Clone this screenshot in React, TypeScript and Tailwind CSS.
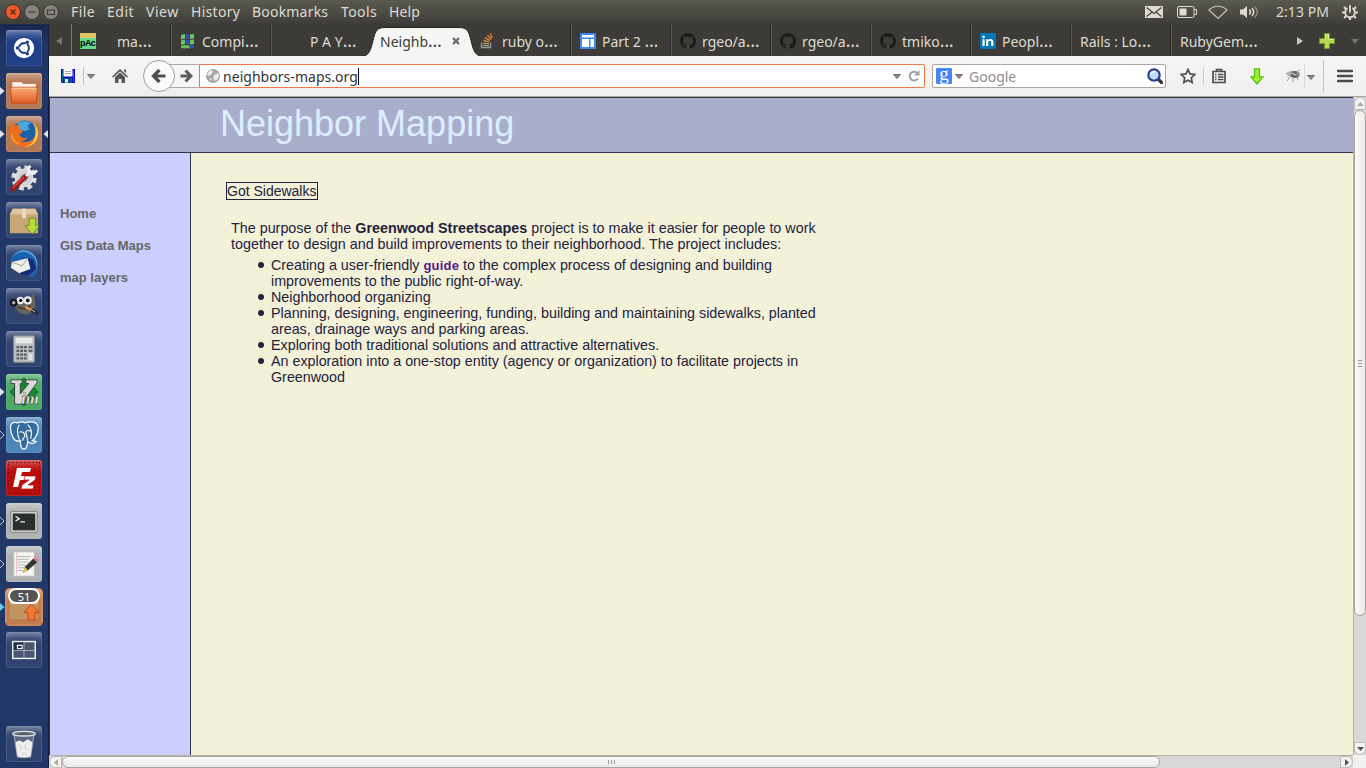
import React from "react";

const GITHUB =
  "M8 0C3.58 0 0 3.58 0 8c0 3.54 2.29 6.53 5.47 7.59.4.07.55-.17.55-.38 0-.19-.01-.82-.01-1.49-2.01.37-2.53-.49-2.69-.94-.09-.23-.48-.94-.82-1.13-.28-.15-.68-.52-.01-.53.63-.01 1.08.58 1.23.82.72 1.21 1.87.87 2.33.66.07-.52.28-.87.51-1.07-1.78-.2-3.64-.89-3.64-3.95 0-.87.31-1.59.82-2.15-.08-.2-.36-1.02.08-2.12 0 0 .67-.21 2.2.82.64-.18 1.32-.27 2-.27s1.36.09 2 .27c1.53-1.04 2.2-.82 2.2-.82.44 1.1.16 1.92.08 2.12.51.56.82 1.27.82 2.15 0 3.07-1.87 3.75-3.65 3.95.29.25.54.73.54 1.48 0 1.07-.01 1.93-.01 2.2 0 .21.15.46.55.38A8.01 8.01 0 0 0 16 8c0-4.42-3.58-8-8-8z";

function GithubIcon() {
  return (
    <svg className="h-4 w-4" viewBox="0 0 16 16">
      <path d={GITHUB} fill="#1b1b1b" />
    </svg>
  );
}

function PacIcon() {
  return (
    <span className="flex h-4 w-4 flex-col overflow-hidden bg-[#62dc8c]">
      <span className="h-[5px] shrink-0 bg-[#e0c468]" />
      <span className="text-[9px] leading-[10px] font-bold tracking-[-0.6px] text-black [font-family:'Liberation_Sans',sans-serif]">pAc</span>
    </span>
  );
}

function CompizIcon() {
  return (
    <svg className="h-4 w-4" viewBox="0 0 16 16">
      <path d="M1 2l4-1v4.500l-4 1zM1 7.500l4-1V11l-4 1zM1 13l4-1 1 1v2.500L1 15z" fill="#66c95c" />
      <path d="M5.500 1l4 .5V6l-4-.5zM5.500 6.500L9.500 7v4.500l-4-.5z" fill="#4a45c8" />
      <path d="M10 1.500L14 1v4.500L10 6zM10 7l4-.5V11l-4 .5zM5.500 12l4 .5v3l-3-.5z" fill="#66c95c" />
      <path d="M10 12.500l4-.5v3l-4 .5z" fill="#4a45c8" />
    </svg>
  );
}

function StackIcon() {
  return (
    <svg className="h-4 w-4" viewBox="0 0 16 16" fill="none">
      <path d="M1.500 9.500v5h9v-5" stroke="#9a9c9e" strokeWidth="1.300" />
      <path d="M3 12.500h6" stroke="#a59a80" strokeWidth="1.300" />
      <path d="M3 10.200l6 .6" stroke="#b49458" strokeWidth="1.300" />
      <path d="M3.400 7.500l5.900 1.400" stroke="#d08e3c" strokeWidth="1.300" />
      <path d="M4.800 4.600l5.200 2.800" stroke="#e88a2a" strokeWidth="1.300" />
      <path d="M7.300 2l3.900 4.200M10.300.5l2.100 4.600" stroke="#f48024" strokeWidth="1.300" />
    </svg>
  );
}

function PanelIcon() {
  return (
    <svg className="h-4 w-4" viewBox="0 0 16 16">
      <rect width="16" height="16" rx="1" fill="#4285f4" />
      <path d="M2 2h12v2.500H2zM2 6h7v8H2zM10.500 6H14v8h-3.500z" fill="#fff" />
    </svg>
  );
}

function LinkedInIcon() {
  return (
    <svg className="h-4 w-4" viewBox="0 0 16 16">
      <rect width="16" height="16" rx="1" fill="#0177b5" />
      <path d="M2.500 6.200h2.200V13H2.500zM6.100 6.200h2.100v1c.4-.7 1.200-1.200 2.300-1.200 2.200 0 2.900 1.300 2.900 3.300V13h-2.200V9.600c0-1-.2-1.800-1.300-1.800S8.300 8.600 8.300 9.600V13H6.100z" fill="#fff" />
      <circle cx="3.600" cy="3.900" r="1.300" fill="#fff" />
    </svg>
  );
}

type TabProps = { icon?: React.ReactNode; label: string; pad?: string; sep?: boolean; track?: string };

function Ellipsis() {
  return <span className="text-[17.500px] leading-none">…</span>;
}

function Tab({ icon, label, pad = "pl-2", sep = true, track = "" }: TabProps) {
  return (
    <div className={`flex h-8 w-[100px] shrink-0 items-center gap-1.5 pt-0.5 ${pad} ${sep ? "border-r border-[#5d5c56] shadow-[inset_-1px_0_0_#262522]" : ""}`}>
      {icon}
      <span className={`pt-px text-[14px] leading-5 whitespace-pre text-[#dfdbd2] ${track}`}>{label}<Ellipsis /></span>
    </div>
  );
}

function ActiveTab() {
  return (
    <div className="relative flex h-8 w-[100px] shrink-0 items-center pt-0.5 pl-2">
      <svg className="absolute top-[3px] -left-[11px] h-[30px] w-[122px]" viewBox="0 0 122 30">
        <path d="M0 29.500C7 29 9 25 11 17.500 14 6 14 .5 24 .5h74c10 0 10 5.500 13 17 2 7.500 4 11.500 11 12z" fill="#f5f5f4" stroke="#23221f" strokeWidth="1" />
        <path d="M0 29h122v1H0z" fill="#f5f5f4" />
      </svg>
      <span className="relative pt-px text-[14px] leading-5 whitespace-pre text-[#3c3c3c]">Neighb<Ellipsis /></span>
      <svg className="relative mr-3 ml-auto h-2 w-2" viewBox="0 0 8 8">
        <path d="M1 1l6 6M7 1L1 7" stroke="#666" strokeWidth="2.200" />
      </svg>
    </div>
  );
}

function MenuBar() {
  return (
    <div className="flex h-6 shrink-0 items-center bg-linear-to-b from-[#5b5a50] to-[#3e3d39] text-[14px] text-[#dfdbd2]">
      <div className="flex w-[71px] gap-[3px] pl-[5px]">
        <svg className="h-4 w-4" viewBox="0 0 16 16">
          <circle cx="8" cy="8" r="7.500" fill="#f0592a" stroke="#3a3530" />
          <path d="M5.500 5.500l5 5M10.500 5.500l-5 5" stroke="#4a2418" strokeWidth="1.300" />
        </svg>
        <svg className="h-4 w-4" viewBox="0 0 16 16">
          <circle cx="8" cy="8" r="7.500" fill="#85837c" stroke="#3a3935" />
          <path d="M4.500 8h7" stroke="#3a3935" strokeWidth="1.200" />
        </svg>
        <svg className="h-4 w-4" viewBox="0 0 16 16">
          <circle cx="8" cy="8" r="7.500" fill="#85837c" stroke="#3a3935" />
          <path d="M4.500 6h7v4.500h-7z" fill="none" stroke="#3a3935" strokeWidth="1.200" />
        </svg>
      </div>
      <div className="flex -translate-y-px tracking-[0.12px]">
        <span className="w-9 tracking-[0.4px]">File</span>
        <span className="w-[39px] tracking-[0.5px]">Edit</span>
        <span className="w-[45px] tracking-[0.5px]">View</span>
        <span className="w-[61px] tracking-[0.3px]">History</span>
        <span className="w-[89px] tracking-[0.2px]">Bookmarks</span>
        <span className="w-12 tracking-[0.4px]">Tools</span>
        <span>Help</span>
      </div>
      <div className="ml-auto flex items-center">
        <svg className="h-3 w-[18px]" viewBox="0 0 18 12">
          <rect width="18" height="12" fill="#dfdbd2" />
          <path d="M1.500 1.500L9 7.500l7.500-6M1.500 10.500L7 6.200M16.500 10.500L11 6.200" fill="none" stroke="#484741" strokeWidth="1.300" />
        </svg>
        <svg className="ml-3.5 h-3 w-5" viewBox="0 0 20 12">
          <rect x=".5" y=".5" width="16.500" height="11" rx="1.500" fill="none" stroke="#dfdbd2" />
          <path d="M17 3.500h2.500v5H17" fill="none" stroke="#dfdbd2" />
          <rect x="2.500" y="2.500" width="7" height="7" fill="#dfdbd2" />
        </svg>
        <svg className="ml-[11px] h-4 w-5" viewBox="0 0 20 16">
          <path d="M1 6C6 1 14 1 19 6L10 14.500z" fill="none" stroke="#c9c5bd" strokeWidth="1.200" />
        </svg>
        <svg className="ml-3 h-4 w-5" viewBox="0 0 20 16">
          <path d="M0 5.500h3L7 2v12l-4-3.500H0z" fill="#dfdbd2" />
          <path d="M9.500 5.500q2 2.500 0 5M12 4q3.400 4 0 8" fill="none" stroke="#dfdbd2" strokeWidth="1.500" />
          <path d="M14.800 2.500q5 5.500 0 11" fill="none" stroke="#8a8880" strokeWidth="1.500" />
        </svg>
        <span className="ml-4 w-[66px] -translate-y-px tracking-[0.05px] whitespace-nowrap">2:13 PM</span>
        <svg className="mr-2 h-4 w-4" viewBox="0 0 16 16">
          <circle cx="8" cy="8.500" r="4.800" fill="none" stroke="#dfdbd2" strokeWidth="1.900" />
          <path d="M8 13v3M3.800 12.200l-1.600 1.800M12.200 12.200l1.600 1.800M3 8.500H0M13 8.500h3M4 5L2 3M12 5l2-2" stroke="#dfdbd2" strokeWidth="2.200" />
          <path d="M8 1v7" stroke="#47463f" strokeWidth="4.500" />
          <path d="M8 1v7.500" stroke="#dfdbd2" strokeWidth="1.900" />
        </svg>
      </div>
    </div>
  );
}

function TabStrip() {
  return (
    <div className="flex h-8 shrink-0 items-center bg-[#3c3b37]">
      <div className="flex h-8 w-[23px] shrink-0 items-center border-r border-[#777670] pt-0.5 pl-[7px]">
        <svg className="h-2 w-1.5" viewBox="0 0 6 8"><path d="M6 0v8L0 4z" fill="#75746f" /></svg>
      </div>
      <Tab icon={<PacIcon />} label={"   ma"} pad="pl-2" track="pl-1" />
      <Tab icon={<CompizIcon />} label="Compi" />
      <Tab label="P A Y" pad="pl-[38px]" sep={false} />
      <ActiveTab />
      <Tab icon={<StackIcon />} label="ruby o" />
      <Tab icon={<PanelIcon />} label="Part 2 " />
      <Tab icon={<GithubIcon />} label="rgeo/a" />
      <Tab icon={<GithubIcon />} label="rgeo/a" />
      <Tab icon={<GithubIcon />} label="tmiko" />
      <Tab icon={<LinkedInIcon />} label="Peopl" />
      <Tab label="Rails : Lo" />
      <Tab label="RubyGem" sep={false} />
      <div className="flex items-center pt-0.5">
        <svg className="ml-[25px] h-2 w-1.5 shrink-0" viewBox="0 0 6 8"><path d="M0 0v8l6-4z" fill="#c9c6bf" /></svg>
        <svg className="ml-4 h-4 w-4 shrink-0" viewBox="0 0 16 16">
          <path d="M5.500.5h5v5h5v5h-5v5h-5v-5h-5v-5h5z" fill="#b4d653" stroke="#6b9a22" />
          <path d="M6.500 6.500v-5h3v5h5" fill="none" stroke="#d8ee9a" />
        </svg>
        <svg className="ml-4 h-[5px] w-2 shrink-0" viewBox="0 0 8 5"><path d="M0 0h8L4 5z" fill="#74736d" /></svg>
      </div>
    </div>
  );
}

function Caret() {
  return <svg className="h-[5px] w-2 shrink-0" viewBox="0 0 8 5"><path d="M.5.5h7L4 4.500z" fill="#888" stroke="#707070" /></svg>;
}

function Toolbar() {
  return (
    <div className="flex h-[41px] shrink-0 items-center border-b border-[#aaa59f] bg-linear-to-b from-[#f6f5f4] to-[#f0efed]">
      <svg className="ml-3 h-3.5 w-3.5 shrink-0" viewBox="0 0 14 14">
        <path d="M0 0h14v14H1l-1-1z" fill="#0a0ac8" />
        <path d="M1 1h1v12H1zM12 2h1v11h-1z" fill="#17709c" />
        <path d="M2.500 0h9v7.500h-9z" fill="#f8f8f8" />
        <path d="M4 2.500h6M4 4.500h6" stroke="#a8a8a8" />
        <path d="M3 9h8v5H3z" fill="#0e4f90" /><path d="M4 10h3v3.500H4z" fill="#f2f2f2" />
      </svg>
      <span className="ml-2 h-[18px] w-px bg-[#c4c4c4]" />
      <span className="ml-[3px] flex"><Caret /></span>
      <svg className="ml-[17px] h-4 w-4 shrink-0" viewBox="0 0 16 16">
        <path d="M0 8.500L8 1l8 7.500-1.200 1L8 3.200 1.200 9.500zM12 1.500h2V5l-2-2z" fill="#555" />
        <path d="M3 9l5-4.500L13 9v6H9.500v-4h-3v4H3z" fill="#555" />
      </svg>
      <div className="relative z-10 ml-[15px] flex h-8 w-8 shrink-0 items-center justify-center rounded-full border border-[#9b9fa4] bg-[#fafafa]">
        <svg className="h-4 w-4" viewBox="0 0 16 16">
          <path d="M14.500 8H3M8.500 2L2.500 8l6 6" fill="none" stroke="#4d4d4d" strokeWidth="3.200" />
        </svg>
      </div>
      <div className="-ml-1.5 flex h-6 w-[30px] shrink-0 items-center border-y border-[#a9a9a9] bg-[#f6f6f6] pl-[11px]">
        <svg className="h-3.5 w-[13px]" viewBox="0 0 13 14">
          <path d="M.5 7H10M5.500 1.500L11 7l-5.500 5.500" fill="none" stroke="#5c5c5c" strokeWidth="3" />
        </svg>
      </div>
      <div className="flex h-6 w-[726px] shrink-0 items-center rounded-r-[2px] border border-[#ee7747] bg-white pl-1.5">
        <svg className="h-3.5 w-3.5" viewBox="0 0 14 14">
          <circle cx="7" cy="7" r="7" fill="#a6a6a6" />
          <path d="M2 3l3-2 2 1-1 3-3 2-2-1zM8 6l4-2 1 3-2 4-2 1-2-3zM3 9l3 1-1 2z" fill="#ececec" />
        </svg>
        <span className="ml-[3px] text-[14px] tracking-[0.04px] text-[#333]">neighbors-maps.org</span>
        <span className="h-[17px] w-px bg-black" />
        <span className="ml-auto flex pt-px"><Caret /></span>
        <svg className="mr-1 ml-[7px] h-3 w-3" viewBox="0 0 12 12">
          <path d="M9.800 8.500A4.400 4.400 0 1 1 9 2.800" fill="none" stroke="#98a1a8" strokeWidth="2" />
          <path d="M11.500 0v5.500H6z" fill="#98a1a8" />
        </svg>
      </div>
      <div className="ml-[7px] flex h-6 w-[234px] shrink-0 items-center rounded-[2px] border border-[#aaa5a0] bg-white pl-[3px]">
        <span className="flex h-4 w-4 items-center justify-center rounded-[1px] bg-[#4784f5] text-[19px] leading-none text-white [font-family:'Liberation_Serif',serif]"><span className="-mt-[5px]">g</span></span>
        <span className="ml-[3px] flex pt-px"><Caret /></span>
        <span className="ml-1.5 text-[14px] text-[#8e8e8e]">Google</span>
        <svg className="mr-0.5 ml-auto h-4 w-4" viewBox="0 0 16 16">
          <path d="M11 11l3.500 3.500" stroke="#333" strokeWidth="3.200" strokeLinecap="round" />
          <circle cx="7" cy="7" r="5.700" fill="#bfdcf5" stroke="#2d3f94" strokeWidth="2.200" />
          <path d="M4 6q1-2.500 4-2.500" stroke="#fff" fill="none" strokeWidth="1.500" />
        </svg>
      </div>
      <svg className="ml-3.5 h-4 w-4 shrink-0" viewBox="0 0 16 16">
        <path d="M8 1.500l2 4.400 4.800.6-3.500 3.300.9 4.700L8 12.200l-4.200 2.300.9-4.700L1.200 6.500 6 5.900z" fill="none" stroke="#505050" strokeWidth="1.700" />
      </svg>
      <span className="ml-[7px] h-[18px] w-px bg-[#cfcfcf]" />
      <svg className="ml-2 h-4 w-3.5 shrink-0" viewBox="0 0 14 16">
        <path d="M1 3.500h12v11H1zM4.500 3.500V1.500h5v2" fill="none" stroke="#4d4d4d" strokeWidth="1.700" />
        <path d="M3 6.500h1.500M6 6.500h5.500M3 9h1.500M6 9h5.500M3 11.500h1.500M6 11.500h5.500" stroke="#4d4d4d" strokeWidth="1.300" />
      </svg>
      <svg className="ml-6 h-[17px] w-3.5 shrink-0" viewBox="0 0 14 17">
        <path d="M4.500.8h5v8h3.700L7 16 .8 8.800h3.700z" fill="#9cf02c" stroke="#58bd17" strokeWidth="1.300" />
      </svg>
      <svg className="ml-5 h-4 w-[18px] shrink-0" viewBox="0 0 18 16">
        <path d="M2 5.500L8 3l5 3-3 3-5-1z" fill="#b8b8b8" stroke="#8a8a8a" strokeWidth=".6" />
        <ellipse cx="11" cy="6.500" rx="4.500" ry="3.500" fill="#666" />
        <path d="M6 9l-3 4M9 9.500V14M13 9l1 3.500M14 3l2-1" stroke="#999" />
        <circle cx="14" cy="6" r="1.800" fill="#999" /><path d="M7 5l5 2" stroke="#ddd" />
      </svg>
      <span className="ml-0.5 h-6 w-px bg-[#d8d8d8]" />
      <span className="ml-[2px] flex pt-0.5"><Caret /></span>
      <span className="ml-2 h-8 w-px bg-[#c0c4c8]" />
      <svg className="ml-[13px] h-3.5 w-4 shrink-0" viewBox="0 0 16 14">
        <path d="M1 2h14M1 7h14M1 12h14" stroke="#4a4a4a" strokeWidth="2.500" strokeLinecap="round" />
      </svg>
    </div>
  );
}

type Mark = "none" | "solid" | "open" | "blue";

function Tile({ tone, mark = "none", active = false, children }: { tone: string; mark?: Mark; active?: boolean; children: React.ReactNode }) {
  return (
    <div className="flex h-9 w-12 shrink-0 items-center">
      <svg className="h-2.5 w-1.5 shrink-0" viewBox="0 0 6 10">
        {mark === "solid" && <path d="M0 1l4.500 4L0 9z" fill="#dfe2e8" />}
        {mark === "blue" && <path d="M0 1l4.500 4L0 9z" fill="#6ec4ee" />}
        {mark === "open" && <path d="M0 1l4 4-4 4" fill="none" stroke="#c3c9d6" />}
      </svg>
      <div className={`flex h-9 w-9 shrink-0 items-center justify-center rounded-[3px] shadow-[inset_0_0_0_1px_rgba(255,255,255,0.08),inset_0_9px_10px_-7px_rgba(255,255,255,0.55)] ${tone}`}>{children}</div>
      <svg className="h-2.5 w-1.5 shrink-0" viewBox="0 0 6 10">{active && <path d="M6 1L1.500 5 6 9z" fill="#dfe2e8" />}</svg>
    </div>
  );
}

const ICON = "h-[30px] w-[30px]";
const DARK = "bg-[#30446f]";

function Launcher() {
  return (
    <aside className="flex w-[49px] shrink-0 flex-col gap-[7px] border-r border-[#151f35] bg-linear-to-b from-[#17264b] via-[#213767] via-3% to-[#213767] pt-1.5">
      <Tile tone="bg-[#213f88]">
        <svg className={ICON} viewBox="0 0 32 32">
          <circle cx="16" cy="16" r="10.800" fill="#fff" />
          <circle cx="16" cy="16" r="5.200" fill="none" stroke="#213f88" strokeWidth="2.200" />
          <path d="M16 16H7M16 16l4.500-7.800M16 16l4.500 7.800" stroke="#fff" strokeWidth="1.500" />
          <circle cx="16" cy="16" r="3.400" fill="#fff" />
          <circle cx="9" cy="16" r="1.900" fill="#213f88" /><circle cx="19.500" cy="9.900" r="1.900" fill="#213f88" /><circle cx="19.500" cy="22.100" r="1.900" fill="#213f88" />
        </svg>
      </Tile>
      <Tile tone="bg-[#b47854]" mark="solid">
        <svg className={ICON} viewBox="0 0 32 32">
          <defs><linearGradient id="fold" x2="0" y2="1"><stop stopColor="#f7ae78" /><stop offset="1" stopColor="#e65c24" /></linearGradient></defs>
          <path d="M3 8V6h10l2 2h14v6H3z" fill="#f6f3ef" stroke="#c9633a" strokeWidth=".8" />
          <path d="M1.500 12h29L29 29H3z" fill="url(#fold)" stroke="#c64c1b" />
          <path d="M3 13h26" stroke="#fbd0ae" />
        </svg>
      </Tile>
      <Tile tone="bg-[#b47854]" mark="solid" active>
        <svg className={ICON} viewBox="0 0 32 32">
          <circle cx="17" cy="14" r="12.500" fill="#1c5fa6" />
          <path d="M9 4q8-4 15 0l-4 3 2 4-5 2-6-2z" fill="#4aa7de" />
          <path d="M1 17C0 11 2 7 4 4q0 3 2 4 3-2 6-1-2 3-1 4l4 1q-1 3-4 4 0 3 4 4 3 1 5-1-2 5-8 4 8 4 14-2 4-5 2-12 5 8-1 15c-3 4-7 6-11 6C8 30 2 25 1 17z" fill="#ee6f1e" />
          <path d="M25 4q7 5 6 13c-1 8-8 13-15 13 7-2 11-6 12-12 1-6 0-10-3-14z" fill="#ffc93c" />
          <path d="M3 14q1 10 10 13-9 0-11-9z" fill="#f9a02a" />
        </svg>
      </Tile>
      <Tile tone={DARK}>
        <svg className={ICON} viewBox="0 0 32 32">
          <circle cx="16" cy="17" r="11" fill="none" stroke="#d6d8da" strokeWidth="5" strokeDasharray="4.900 3.740" />
          <circle cx="16" cy="17" r="9.500" fill="#d3d5d7" stroke="#e9eaea" /><circle cx="16" cy="17" r="4" fill="#8d98aa" />
          <path d="M4 29L18 15" stroke="#9b1616" strokeWidth="5" strokeLinecap="round" /><path d="M4 28L16 16" stroke="#dd4a40" strokeWidth="1.600" />
          <path d="M18 15l6-6M23 4q-4 3-1 6 4 3 8-1" fill="none" stroke="#f0f0f0" strokeWidth="3" />
        </svg>
      </Tile>
      <Tile tone={DARK}>
        <svg className={ICON} viewBox="0 0 32 32">
          <path d="M4 4h24l3 6v20H1V10z" fill="#c7a677" /><path d="M4 4h24l3 6H1z" fill="#dfc69e" /><path d="M14 4h4v10h-4z" fill="#ecdcc0" />
          <path d="M21.500 14h7v8h4L25 31l-8-9h4.500z" fill="#b8dc3c" stroke="#668f18" />
        </svg>
      </Tile>
      <Tile tone={DARK}>
        <svg className={ICON} viewBox="0 0 32 32">
          <path d="M2 12C5 3 15 0 23 5c8 5 9 15 6 23-2 4-7 3-10 0L7 21q-5-3-5-9z" fill="#1c61ad" />
          <path d="M3 10Q14-1 25 8q6 6 4 17 4-14-5-20Q12-2 3 10z" fill="#59a9e2" />
          <path d="M3 15l17-4 3 11-12 5-9-6z" fill="#efefea" /><path d="M3 15l11 4 6-8" fill="none" stroke="#a1a19b" />
          <path d="M20 10l6 3 3 9-8 7 2-7z" fill="#1a2878" /><path d="M11 27l12-4-2 6z" fill="#1a2878" />
        </svg>
      </Tile>
      <Tile tone={DARK}>
        <svg className={ICON} viewBox="0 0 32 32">
          <path d="M7 10q4 3 10-1 6 0 9-6 3 8 2 14-2 7-10 8-8-1-11-7z" fill="#69655b" />
          <circle cx="12" cy="10" r="4" fill="#eee" /><circle cx="20" cy="10" r="4.300" fill="#eee" /><circle cx="12.500" cy="10" r="1.800" fill="#111" /><circle cx="20" cy="10" r="2" fill="#111" />
          <circle cx="5" cy="12.500" r="4" fill="#131313" /><circle cx="5" cy="12.500" r="1.900" fill="#aaa" />
          <path d="M9 17q8 4 14-1" fill="none" stroke="#33302b" strokeWidth="1.500" />
          <path d="M17 17l8 3.500" stroke="#e9994a" strokeWidth="2.500" /><path d="M24 20l7 4.500" stroke="#252525" strokeWidth="3.500" /><path d="M24 20l4 2.500" stroke="#ddd" />
        </svg>
      </Tile>
      <Tile tone={DARK}>
        <svg className={ICON} viewBox="0 0 32 32">
          <rect x="5" y="2" width="22" height="28" rx="1" fill="#bdc1c2" stroke="#8f9698" /><rect x="7" y="4" width="18" height="6" fill="#e6e9e7" />
          <path d="M8 14h11M8 18h11M8 22h11M8 26h11" stroke="#5a6063" strokeWidth="2.600" strokeDasharray="3 1" /><path d="M21 14h4M21 18h4" stroke="#5a6063" strokeWidth="2.600" /><path d="M21 21h4v7h-4z" fill="#dce4e8" />
        </svg>
      </Tile>
      <Tile tone="bg-[#4aab66]" mark="solid">
        <svg className={ICON} viewBox="0 0 32 32">
          <path d="M16 1l15 15-15 15L1 16z" fill="#138a31" stroke="#0c5c20" />
          <path d="M2 3h12v4h-2v11L21 7h-3V3h12v3L13 29H6V7H2z" fill="#d8d8d6" stroke="#333" strokeWidth=".9" />
          <text x="13" y="29" className="text-[18px] font-bold italic [font-family:'Liberation_Serif',serif]" fill="#f2f2f2" stroke="#222" strokeWidth=".4">im</text>
        </svg>
      </Tile>
      <Tile tone="bg-[#4d86ba]" mark="open">
        <svg className={ICON} viewBox="0 0 32 32">
          <path d="M9 3Q14 1 17 3q12-3 14 4c1 6-3 13-6 15l4 1q-4 4-9 0-1 8-4 8-4 0-4-9-5 2-8-4Q-1 6 4 3q2-1 5 0z" fill="#356a9e" stroke="#fff" strokeWidth="1.300" />
          <path d="M11 5q-4 6 0 16M11 13q5-2 6 4l-3 5M20 5q6 6 3 15M23 12q-4-2-5 1l2 9" fill="none" stroke="#fff" strokeWidth="1.200" />
        </svg>
      </Tile>
      <Tile tone="bg-[#b90d0c]">
        <svg className="h-8 w-8" viewBox="0 0 32 32">
          <rect x="0" y="0" width="32" height="32" fill="none" stroke="#831213" strokeWidth="2" strokeDasharray="2 2" />
          <path d="M9 6h14l-1 4h-8l-1 4h7l-1 4h-7l-2 7H5z" fill="#fff" />
          <path d="M17 14h11l-1 4-7 5h6l-1 4H13l1-4 7-5h-5z" fill="#fff" stroke="#b90d0c" strokeWidth=".7" />
        </svg>
      </Tile>
      <Tile tone="bg-[#afb1b3]" mark="open">
        <svg className={ICON} viewBox="0 0 32 32">
          <rect x="2" y="6" width="28" height="22" rx="1" fill="#ddd" stroke="#777" /><rect x="4" y="8" width="24" height="18" fill="#2b2e2f" />
          <path d="M7 11l4 2.500L7 16M12 17h5" fill="none" stroke="#f4f4f4" strokeWidth="1.400" />
        </svg>
      </Tile>
      <Tile tone="bg-[#afb1b3]" mark="open">
        <svg className={ICON} viewBox="0 0 32 32">
          <rect x="5" y="3" width="22" height="26" fill="#f4f4f2" stroke="#bbb" />
          <path d="M9 8h14M9 11h12M9 14h12M9 17h9M9 20h8M9 23h6" stroke="#b2b2b2" /><path d="M8 4v24" stroke="#eaa" strokeWidth=".7" />
          <path d="M15 25l2-6L26 10l4 4-10 9z" fill="#343432" /><path d="M15 25l2-6 3 4z" fill="#e8ce44" /><path d="M26 10l2-2 4 4-2 2z" fill="#d87cab" />
        </svg>
      </Tile>
      <Tile tone="bg-[#c17c4e] outline outline-[#d18a56]" mark="blue">
        <div className="relative flex h-8 w-8 justify-center">
          <svg className={ICON} viewBox="0 0 32 32">
            <path d="M1 8h30v22H1z" fill="#bf9561" /><path d="M1 8h30v6H1z" fill="#d5b487" />
            <path d="M20.500 31v-8H16l8-9 8 9h-4.500v8z" fill="#f47836" stroke="#c5410e" />
          </svg>
          <span className="absolute -top-[3px] left-0 flex h-4 w-8 items-center justify-center rounded-full border-2 border-white bg-[#555653] text-[11px] leading-none text-white">51</span>
        </div>
      </Tile>
      <Tile tone={DARK}>
        <svg className={ICON} viewBox="0 0 32 32">
          <rect x="4" y="7" width="24" height="18" fill="#4b5670" stroke="#f5f5f5" strokeWidth="1.500" /><path d="M5 8h11v8H5z" fill="#222c44" /><path d="M16 8v16M5 16.500h22" stroke="#aab1c0" />
          <rect x="9" y="11" width="5" height="3.500" fill="#28334f" stroke="#fff" strokeWidth="1.200" />
        </svg>
      </Tile>
      <div className="mt-auto pb-1.5">
        <Tile tone={DARK}>
          <svg className={ICON} viewBox="0 0 32 32">
            <path d="M5 4l4 26h14l4-26z" fill="#5b6880" stroke="#aab3bd" />
            <path d="M7 14l4-2 4 2 5-3 5 3-2 15q-7 3-14 0z" fill="#f0f0f0" /><path d="M10 17l4 2-2 4M18 16l-1 5 5 1M14 28l2-3 3 3" fill="none" stroke="#cdcdcd" />
            <ellipse cx="16" cy="5" rx="12" ry="2.500" fill="#59616e" stroke="#e2e5e6" strokeWidth="1.500" />
          </svg>
        </Tile>
      </div>
    </aside>
  );
}

function Item({ children }: { children: React.ReactNode }) {
  return (
    <li className="flex">
      <span className="mt-[5px] mr-[7px] h-1.5 w-1.5 shrink-0 rounded-full bg-[#22223e]" />
      <span className="tracking-[-0.02px] whitespace-nowrap">{children}</span>
    </li>
  );
}

function WebPage() {
  return (
    <div className="flex min-w-0 flex-1 flex-col border-t border-l border-[#32334a] bg-[#f4f1d9] text-[14px] leading-4 text-[#22223e] [font-family:'Liberation_Sans',Arial,sans-serif]">
      <header className="h-[55px] shrink-0 border-b border-[#32334a] bg-[#aaaecd] pl-[170px] text-[36px] leading-[51px] text-[#ddeeff]">Neighbor Mapping</header>
      <div className="flex flex-1">
        <nav className="flex w-[141px] shrink-0 flex-col gap-4 border-r border-[#32334a] bg-[#ccceff] pt-[53px] pl-2.5 text-[13px] font-bold text-[#666666]">
          <a>Home</a>
          <a>GIS Data Maps</a>
          <a>map layers</a>
        </nav>
        <main className="pt-[29px] pl-[35px]">
          <div className="h-[18px] w-[92px] border border-[#22223e] whitespace-nowrap">Got Sidewalks</div>
          <div className="w-[620px] pt-5 pl-[5px] text-[14.330px]">
            <p>The purpose of the <b>Greenwood Streetscapes</b> project is to make it easier for people to work<br />together to design and build improvements to their neighborhood. The project includes:</p>
            <ul className="mt-[5px] pl-[27px]">
              <Item>Creating a user-friendly <a className="text-[13px] leading-none font-bold tracking-[0.2px] text-[#551a8b]">guide</a> to the complex process of designing and building<br />improvements to the public right-of-way.</Item>
              <Item>Neighborhood organizing</Item>
              <Item>Planning, designing, engineering, funding, building and maintaining sidewalks, planted<br />areas, drainage ways and parking areas.</Item>
              <Item>Exploring both traditional solutions and attractive alternatives.</Item>
              <Item>An exploration into a one-stop entity (agency or organization) to facilitate projects in<br />Greenwood</Item>
            </ul>
          </div>
        </main>
      </div>
    </div>
  );
}

function VerticalBar() {
  return (
    <div className="flex w-[13px] shrink-0 flex-col border-l border-[#b5b1aa] bg-[#d9d8d6]">
      <div className="flex h-[13px] items-center justify-center rounded-t-full border border-[#bbb] bg-[#f3f2f1]">
        <svg className="h-1 w-[7px]" viewBox="0 0 7 4"><path d="M0 4h7L3.500 0z" fill="#aaa" /></svg>
      </div>
      <div className="flex h-[506px] flex-col items-center justify-center gap-0.5 rounded-full border border-[#a7a39d] bg-linear-to-r from-[#fbfbfb] to-[#eae9e8]">
        <span className="h-px w-1 bg-[#999]" /><span className="h-px w-1 bg-[#999]" /><span className="h-px w-1 bg-[#999]" />
      </div>
      <div className="mt-auto flex h-[13px] items-center justify-center rounded-b-full border border-[#bbb] bg-[#f3f2f1]">
        <svg className="h-1 w-[7px]" viewBox="0 0 7 4"><path d="M0 0h7L3.500 4z" fill="#555" /></svg>
      </div>
    </div>
  );
}

function HorizontalBar() {
  return (
    <div className="flex h-[13px] shrink-0 bg-[#f2f1f0]">
      <div className="flex w-[1304px] border-t border-[#b5b1aa] bg-[#d9d8d6]">
        <div className="flex w-[13px] items-center justify-center rounded-l-full border border-[#bbb] bg-[#f3f2f1]">
          <svg className="h-[7px] w-1" viewBox="0 0 4 7"><path d="M4 0v7L0 3.500z" fill="#aaa" /></svg>
        </div>
        <div className="flex w-[1098px] items-center justify-center gap-0.5 rounded-full border border-[#a7a39d] bg-linear-to-b from-[#fbfbfb] to-[#eae9e8]">
          <span className="h-1 w-px bg-[#999]" /><span className="h-1 w-px bg-[#999]" /><span className="h-1 w-px bg-[#999]" />
        </div>
        <div className="ml-auto flex w-[13px] items-center justify-center rounded-r-full border border-[#bbb] bg-[#f3f2f1]">
          <svg className="h-[7px] w-1" viewBox="0 0 4 7"><path d="M0 0v7l4-3.500z" fill="#555" /></svg>
        </div>
      </div>
    </div>
  );
}

export default function App() {
  return (
    <div className="flex h-[768px] w-[1366px] flex-col overflow-hidden [font-family:'Noto_Sans',sans-serif]">
      <MenuBar />
      <div className="flex min-h-0 flex-1">
        <Launcher />
        <div className="flex min-w-0 flex-1 flex-col">
          <TabStrip />
          <Toolbar />
          <div className="flex min-h-0 flex-1">
            <WebPage />
            <VerticalBar />
          </div>
          <HorizontalBar />
        </div>
      </div>
    </div>
  );
}
